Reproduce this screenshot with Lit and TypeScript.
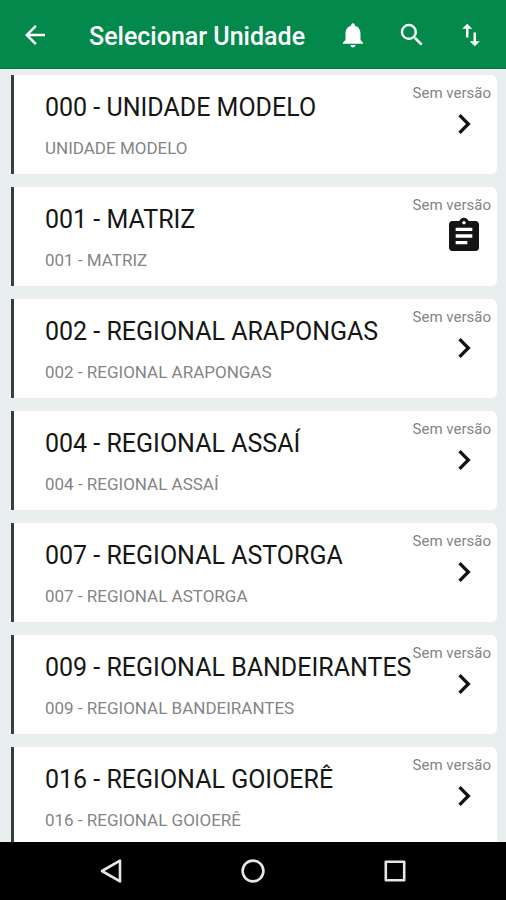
import { LitElement, css, html, svg } from "lit";
import { customElement, property, state } from "lit/decorators.js";

interface Unit {
  title: string;
  subtitle: string;
  version: string;
  kind: "group" | "form";
}

const NO_VERSION = "Sem versão";

const UNITS: Unit[] = [
  { title: "000 - UNIDADE MODELO", subtitle: "UNIDADE MODELO", version: NO_VERSION, kind: "group" },
  { title: "001 - MATRIZ", subtitle: "001 - MATRIZ", version: NO_VERSION, kind: "form" },
  { title: "002 - REGIONAL ARAPONGAS", subtitle: "002 - REGIONAL ARAPONGAS", version: NO_VERSION, kind: "group" },
  { title: "004 - REGIONAL ASSAÍ", subtitle: "004 - REGIONAL ASSAÍ", version: NO_VERSION, kind: "group" },
  { title: "007 - REGIONAL ASTORGA", subtitle: "007 - REGIONAL ASTORGA", version: NO_VERSION, kind: "group" },
  { title: "009 - REGIONAL BANDEIRANTES", subtitle: "009 - REGIONAL BANDEIRANTES", version: NO_VERSION, kind: "group" },
  { title: "016 - REGIONAL GOIOERÊ", subtitle: "016 - REGIONAL GOIOERÊ", version: NO_VERSION, kind: "group" },
];

const ICONS = {
  back: svg`<path d="M20 11H7.83l5.59-5.59L12 4l-8 8 8 8 1.41-1.41L7.83 13H20v-2z"/>`,
  bell: svg`<path d="M12 22c1.1 0 2-.9 2-2h-4c0 1.1.9 2 2 2zm6-6v-5c0-3.07-1.63-5.64-4.5-6.32V4c0-.83-.67-1.5-1.5-1.5s-1.5.67-1.5 1.5v.68C7.64 5.36 6 7.92 6 11v5l-2 2v1h16v-1l-2-2z"/>`,
  search: svg`<path d="M15.5 14h-.79l-.28-.27A6.471 6.471 0 0 0 16 9.5 6.5 6.5 0 1 0 9.5 16c1.61 0 3.09-.59 4.23-1.57l.27.28v.79l5 4.99L20.49 19l-4.99-5zm-6 0C7.01 14 5 11.99 5 9.5S7.01 5 9.5 5 14 7.01 14 9.5 11.99 14 9.5 14z"/>`,
  swap: svg`<path d="M16 17.01V10h-2v7.01h-3L15 21l4-3.99h-3zM9 3L5 6.99h3V14h2V6.99h3L9 3z"/>`,
  group: svg`<path d="M8.59 16.59L13.17 12 8.59 7.41 10 6l6 6-6 6z"/>`,
  form: svg`<path d="M19 3h-4.18C14.4 1.84 13.3 1 12 1s-2.4.84-2.82 2H5c-1.1 0-2 .9-2 2v14c0 1.1.9 2 2 2h14c1.1 0 2-.9 2-2V5c0-1.1-.9-2-2-2zm-7 0c.55 0 1 .45 1 1s-.45 1-1 1-1-.45-1-1 .45-1 1-1zm2 14H7v-2h7v2zm3-4H7v-2h10v2zm0-4H7V7h10v2z"/>`,
};

const icon = (name: keyof typeof ICONS) =>
  html`<svg class="icon" viewBox="0 0 24 24" aria-hidden="true">${ICONS[name]}</svg>`;

@customElement("app-bar")
export class AppBar extends LitElement {
  @property() heading = "";

  static styles = css`
    .bar {
      display: flex;
      align-items: center;
      min-height: 69px;
      box-sizing: border-box;
      padding: 2px 6px 0 5px;
      background: #03894b;
      border-bottom: 1px solid #04773f;
      color: #fff;
    }
    .action {
      display: flex;
      justify-content: center;
      width: 59px;
      padding: 8px 0;
      border: 0;
      background: none;
      color: inherit;
      cursor: pointer;
    }
    .icon {
      width: 30px;
      height: 30px;
      fill: currentColor;
    }
    .heading {
      flex: 1;
      margin: 0;
      padding: 3px 0 0 25px;
      font-size: 25px;
      font-weight: 500;
      line-height: 32px;
      white-space: nowrap;
    }
  `;

  render() {
    return html`
      <header class="bar">
        <button class="action" aria-label="Voltar">${icon("back")}</button>
        <h1 class="heading">${this.heading}</h1>
        <button class="action" aria-label="Notificações">${icon("bell")}</button>
        <button class="action" aria-label="Pesquisar">${icon("search")}</button>
        <button class="action" aria-label="Ordenar">${icon("swap")}</button>
      </header>
    `;
  }
}

@customElement("unit-card")
export class UnitCard extends LitElement {
  @property({ attribute: false }) unit!: Unit;

  static styles = css`
    :host {
      display: block;
    }
    .card {
      display: flex;
      align-items: flex-start;
      width: 100%;
      box-sizing: border-box;
      padding: 8px 6px 16px 31px;
      border: 0;
      border-left: 3px solid #3a3d3f;
      border-radius: 0 6px 6px 0;
      background: #fff;
      font: inherit;
      text-align: left;
      cursor: pointer;
    }
    .texts {
      display: flex;
      flex: 1;
      flex-direction: column;
      gap: 14px;
      min-width: 0;
      padding-top: 9px;
      white-space: nowrap;
    }
    .title {
      color: #161616;
      font-size: 25px;
      line-height: 32px;
    }
    .subtitle {
      color: #858585;
      font-size: 17px;
      line-height: 20px;
    }
    .side {
      display: flex;
      flex-direction: column;
      align-items: flex-end;
      gap: 1px;
    }
    .version {
      color: #858585;
      font-size: 15px;
      line-height: 20px;
    }
    .icon {
      width: 40px;
      height: 40px;
      margin-right: 7px;
      fill: #141416;
    }
  `;

  render() {
    const { title, subtitle, version, kind } = this.unit;
    return html`
      <button class="card">
        <span class="texts">
          <span class="title">${title}</span>
          <span class="subtitle">${subtitle}</span>
        </span>
        <span class="side">
          <span class="version">${version}</span>
          ${icon(kind)}
        </span>
      </button>
    `;
  }
}

@customElement("system-nav")
export class SystemNav extends LitElement {
  static styles = css`
    .nav {
      display: flex;
      padding: 0 40px;
      background: #000;
    }
    .key {
      display: flex;
      flex: 1;
      justify-content: center;
      padding: 15px 0;
      border: 0;
      background: none;
      cursor: pointer;
    }
    .glyph {
      width: 28px;
      height: 28px;
      fill: none;
      stroke: #e6e6e6;
      stroke-width: 2.6;
      stroke-linejoin: round;
    }
  `;

  render() {
    return html`
      <nav class="nav">
        <button class="key" aria-label="Voltar">
          <svg class="glyph" viewBox="0 0 28 28"><path d="M23 3.6V24.4L5 14Z" /></svg>
        </button>
        <button class="key" aria-label="Início">
          <svg class="glyph" viewBox="0 0 28 28"><circle cx="14" cy="14" r="10.4" /></svg>
        </button>
        <button class="key" aria-label="Recentes">
          <svg class="glyph" viewBox="0 0 28 28"><rect x="4.8" y="4.8" width="18.4" height="18.4" /></svg>
        </button>
      </nav>
    `;
  }
}

@customElement("app-root")
export class AppRoot extends LitElement {
  @state() private units = UNITS;

  static styles = css`
    :host {
      display: flex;
      flex-direction: column;
      height: 100vh;
      background: #e9eeee;
      font-family: Roboto, "Liberation Sans", sans-serif;
    }
    .content {
      flex: 1;
      min-height: 0;
      overflow-y: auto;
      scrollbar-width: none;
    }
    .list {
      display: flex;
      flex-direction: column;
      gap: 13px;
      margin: 0;
      padding: 6px 9px 13px 11px;
      list-style: none;
    }
  `;

  render() {
    return html`
      <app-bar heading="Selecionar Unidade"></app-bar>
      <main class="content">
        <ul class="list">
          ${this.units.map((unit) => html`<li><unit-card .unit=${unit}></unit-card></li>`)}
        </ul>
      </main>
      <system-nav></system-nav>
    `;
  }
}
